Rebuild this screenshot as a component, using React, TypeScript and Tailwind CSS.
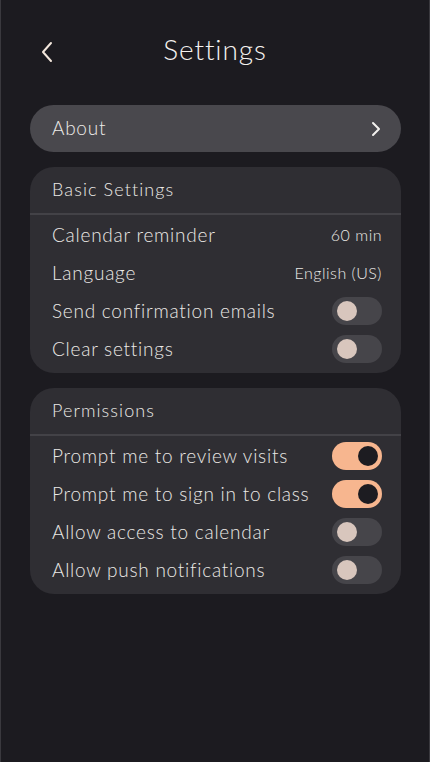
import React from 'react';

const font = { fontFamily: 'Lato, "Open Sans", sans-serif' };

function Toggle({ on }: { on: boolean }) {
  return on ? (
    <div className="w-[50px] h-[28px] rounded-full bg-[#f7b68f] flex items-center justify-end pr-[4px]">
      <div className="w-[20px] h-[20px] rounded-full bg-[#1d1c21]" />
    </div>
  ) : (
    <div className="w-[50px] h-[28px] rounded-full bg-[#46454a] flex items-center pl-[5px]">
      <div className="w-[20px] h-[20px] rounded-full bg-[#d8c6bd]" />
    </div>
  );
}

type Row = { label: string; value?: string; toggle?: boolean };

function Card({ title, rows }: { title: string; rows: Row[] }) {
  return (
    <div className="rounded-[24px] bg-[#2f2e33]">
      <div className="h-[46px] flex items-center px-[22px] pb-[1px] text-[18px] tracking-[1.1px] text-[#ebe9e6]">{title}</div>
      <div className="h-[2px] bg-[#434247]" />
      <div className="pt-[1px] pb-[5px]">
        {rows.map((r) => (
          <div key={r.label} className="h-[38px] flex items-center justify-between pl-[22px] pr-[19px]">
            <span className="text-[19px] tracking-[0.75px] text-[#ebe9e6]">{r.label}</span>
            {r.value !== undefined ? (
              <span className="text-[16px] tracking-[0.5px] text-[#ebe9e6]">{r.value}</span>
            ) : (
              <Toggle on={!!r.toggle} />
            )}
          </div>
        ))}
      </div>
    </div>
  );
}

export default function App() {
  return (
    <div className="w-[430px] h-[762px] bg-[#1c1b20] border-x border-[#3a393e] overflow-hidden font-light" style={font}>
      {/* Header */}
      <div className="relative h-[100px] flex items-center justify-center pb-[2px]">
        <svg className="absolute left-[40px] top-[41px]" width="12" height="22" viewBox="0 0 12 22" fill="none">
          <path d="M10 2L2 11l8 9" stroke="#f3e7dc" strokeWidth="2" strokeLinecap="round" strokeLinejoin="round" />
        </svg>
        <h1 className="text-[28px] text-[#f4f2ef] tracking-[0.9px]">Settings</h1>
      </div>

      <div className="flex flex-col gap-[15px] ml-[29px] mr-[28px] mt-[5px]">
        <div className="h-[47px] rounded-full bg-[#49484d] flex items-center justify-between pl-[22px] pr-[20px]">
          <span className="text-[19px] tracking-[0.75px] text-[#eeece9]">About</span>
          <svg width="10" height="16" viewBox="0 0 10 16" fill="none">
            <path d="M2 2l6 6-6 6" stroke="#f3f1ee" strokeWidth="2" strokeLinecap="round" strokeLinejoin="round" />
          </svg>
        </div>

        <Card
          title="Basic Settings"
          rows={[
            { label: 'Calendar reminder', value: '60 min' },
            { label: 'Language', value: 'English (US)' },
            { label: 'Send confirmation emails', toggle: false },
            { label: 'Clear settings', toggle: false },
          ]}
        />

        <Card
          title="Permissions"
          rows={[
            { label: 'Prompt me to review visits', toggle: true },
            { label: 'Prompt me to sign in to class', toggle: true },
            { label: 'Allow access to calendar', toggle: false },
            { label: 'Allow push notifications', toggle: false },
          ]}
        />
      </div>
    </div>
  );
}
